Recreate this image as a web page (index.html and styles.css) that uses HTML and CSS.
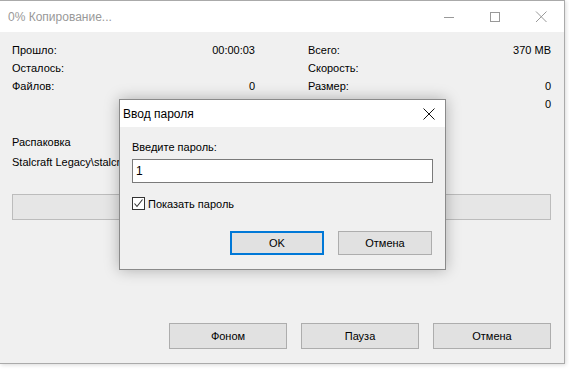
FILE: index.html
```html
<!DOCTYPE html>
<html lang="ru">
<head>
<meta charset="utf-8">
<title>0% Копирование...</title>
<link rel="stylesheet" href="styles.css">
</head>
<body>
<div class="window">
  <div class="titlebar">
    <span class="title">0% Копирование...</span>
    <div class="controls">
      <span class="ctl"><svg width="46" height="31" viewBox="0 0 46 31"><line x1="18" y1="16.5" x2="28" y2="16.5" stroke="#999" stroke-width="1"/></svg></span>
      <span class="ctl"><svg width="46" height="31" viewBox="0 0 46 31"><rect x="18.5" y="11.5" width="9" height="9" fill="none" stroke="#999" stroke-width="1"/></svg></span>
      <span class="ctl"><svg width="46" height="31" viewBox="0 0 46 31"><path d="M18 10.5 L28.5 21 M28.5 10.5 L18 21" stroke="#999" stroke-width="1" fill="none"/></svg></span>
    </div>
  </div>
  <div class="content">
    <div class="stats">
      <div class="col">
        <div class="row"><span>Прошло:</span><span>00:00:03</span></div>
        <div class="row"><span>Осталось:</span><span></span></div>
        <div class="row"><span>Файлов:</span><span>0</span></div>
        <div class="row"><span></span><span></span></div>
      </div>
      <div class="col">
        <div class="row"><span>Всего:</span><span>370 MB</span></div>
        <div class="row"><span>Скорость:</span><span></span></div>
        <div class="row"><span>Размер:</span><span>0</span></div>
        <div class="row"><span></span><span>0</span></div>
      </div>
    </div>
    <div class="op">Распаковка</div>
    <div class="path">Stalcraft Legacy\stalcraft\bin\client.dll</div>
    <div class="progress"></div>
    <div class="spacer"></div>
    <div class="buttons">
      <button class="btn">Фоном</button>
      <button class="btn">Пауза</button>
      <button class="btn">Отмена</button>
    </div>
  </div>

  <div class="dialog">
    <div class="dlg-title">
      <span>Ввод пароля</span>
      <svg class="dlg-close" width="12" height="12" viewBox="0 0 12 12"><path d="M0.5 0.5 L11.5 11.5 M11.5 0.5 L0.5 11.5" stroke="#111" stroke-width="1" fill="none"/></svg>
    </div>
    <div class="dlg-body">
      <div class="dlg-label">Введите пароль:</div>
      <div class="input">1</div>
      <div class="check">
        <span class="box"><svg width="11" height="11" viewBox="0 0 11 11"><path d="M1.5 5.5 L4 8.5 L9.5 1.5" stroke="#333" stroke-width="1.1" fill="none"/></svg></span>
        <span>Показать пароль</span>
      </div>
      <div class="dlg-buttons">
        <button class="dbtn ok">OK</button>
        <button class="dbtn">Отмена</button>
      </div>
    </div>
  </div>
</div>
</body>
</html>
```

FILE: styles.css
```css
* { box-sizing: border-box; }
html, body { margin: 0; padding: 0; }
body {
  background: #ffffff;
  width: 569px;
  height: 370px;
  overflow: hidden;
  font-family: "Liberation Sans", Arial, sans-serif;
  font-size: 11px;
  color: #000;
}
.window {
  position: relative;
  width: 565px;
  height: 364px;
  background: #f0f0f0;
  border-top: 1px solid #aaaaaa;
  border-right: 1px solid #aaaaaa;
  border-bottom: 1px solid #aaaaaa;
  box-shadow: 1px 1px 4px rgba(0,0,0,0.15);
  display: flex;
  flex-direction: column;
}
.titlebar {
  height: 31px;
  background: #ffffff;
  display: flex;
  align-items: center;
  justify-content: space-between;
  flex: none;
}
.title {
  padding-left: 8px;
  font-size: 12px;
  color: #999999;
}
.controls { display: flex; }
.ctl { display: block; width: 46px; height: 31px; }
.ctl svg { display: block; }
.content {
  flex: 1;
  display: flex;
  flex-direction: column;
  padding: 9px 13px 14px 12px;
}
.stats {
  display: grid;
  grid-template-columns: 243px 243px;
  column-gap: 53px;
}
.row {
  height: 18px;
  line-height: 18px;
  display: flex;
  justify-content: space-between;
}
.op { margin-top: 20px; height: 18px; line-height: 18px; }
.path {
  margin-top: 2px;
  height: 18px;
  line-height: 18px;
  white-space: nowrap;
  width: 107px;
  overflow: hidden;
}
.progress {
  margin-top: 23px;
  height: 26px;
  background: #e6e6e6;
  border: 1px solid #bcbcbc;
}
.spacer { flex: 1; }
.buttons {
  display: flex;
  justify-content: flex-end;
  gap: 14px;
}
.btn {
  width: 118px;
  height: 26px;
  background: #e1e1e1;
  border: 1px solid #adadad;
  font-family: "Liberation Sans", Arial, sans-serif;
  font-size: 11px;
  color: #000;
  padding: 0;
}
.dialog {
  position: absolute;
  left: 119px;
  top: 98px;
  width: 327px;
  height: 171px;
  background: #f0f0f0;
  border: 1px solid #8a8a8a;
  box-shadow: 0 0 14px rgba(0,0,0,0.28);
}
.dlg-title {
  height: 27px;
  background: #ffffff;
  display: flex;
  align-items: center;
  justify-content: space-between;
  padding: 0 10px 0 3px;
  font-size: 12px;
}
.dlg-close { display: block; }
.dlg-body { padding: 12px 12px 0 12px; }
.dlg-label { height: 16px; line-height: 16px; }
.input {
  margin-top: 4px;
  width: 301px;
  height: 24px;
  background: #fff;
  border: 1px solid #7a7a7a;
  padding-left: 3px;
  line-height: 22px;
  font-size: 12px;
}
.check {
  margin-top: 14px;
  display: flex;
  align-items: center;
  gap: 3px;
  height: 13px;
}
.box {
  width: 13px;
  height: 13px;
  border: 1px solid #333;
  background: #fff;
  display: flex;
  align-items: center;
  justify-content: center;
}
.box svg { display: block; }
.dlg-buttons {
  margin-top: 21px;
  display: flex;
  gap: 14px;
  padding-left: 98px;
}
.dbtn {
  width: 94px;
  height: 24px;
  background: #e1e1e1;
  border: 1px solid #adadad;
  font-family: "Liberation Sans", Arial, sans-serif;
  font-size: 11px;
  color: #000;
  padding: 0;
}
.dbtn.ok { border: 2px solid #0078d7; }
```
